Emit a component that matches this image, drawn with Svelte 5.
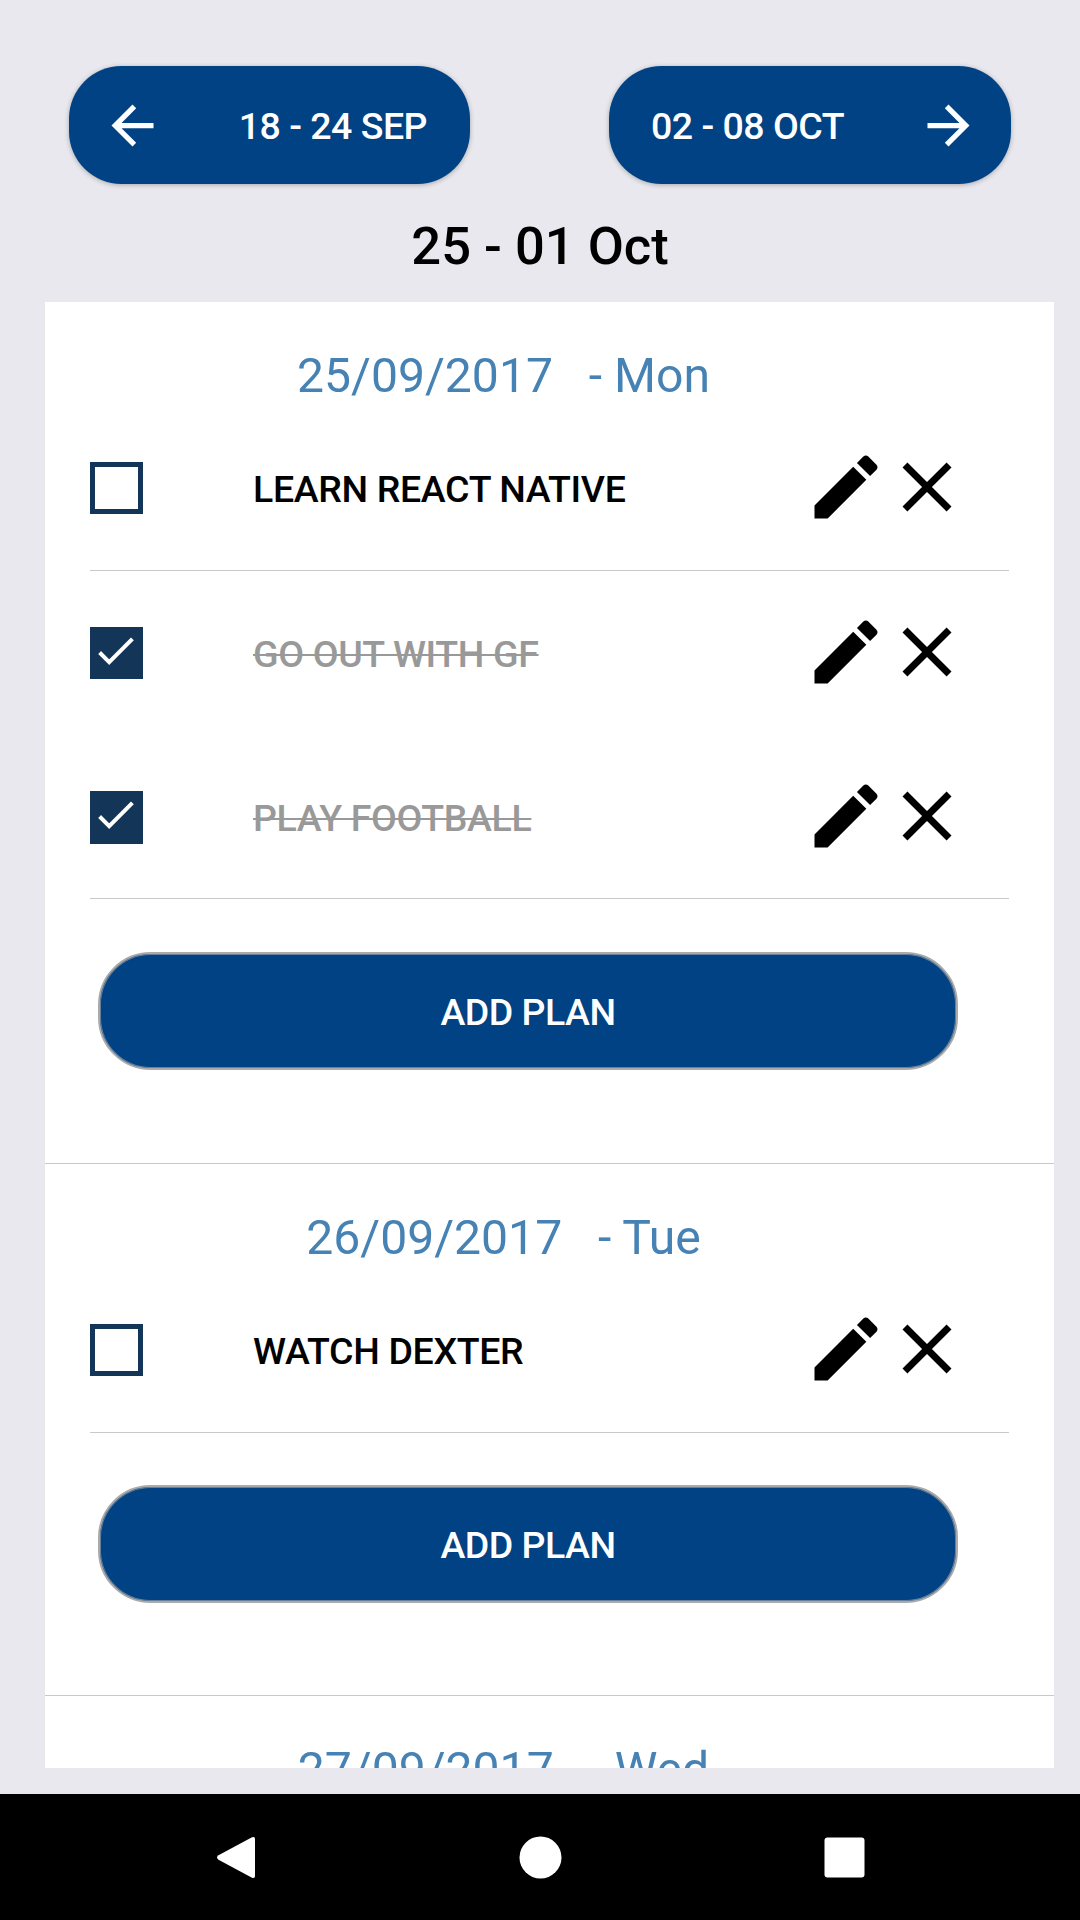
<script>
  const days = [
    {
      date: '25/09/2017',
      day: 'Mon',
      plans: [
        { title: 'LEARN REACT NATIVE', done: false },
        { title: 'GO OUT WITH GF', done: true },
        { title: 'PLAY FOOTBALL', done: true },
      ],
    },
    { date: '26/09/2017', day: 'Tue', plans: [{ title: 'WATCH DEXTER', done: false }] },
    { date: '27/09/2017', day: 'Wed', plans: [] },
  ];
</script>

<div class="screen">
  <header class="weeks">
    <button class="week prev">
      <svg viewBox="0 0 24 24"><path d="M20 11H7.83l5.59-5.59L12 4l-8 8 8 8 1.41-1.41L7.83 13H20v-2z" /></svg>
      <span>18 - 24 SEP</span>
    </button>
    <button class="week next">
      <span>02 - 08 OCT</span>
      <svg viewBox="0 0 24 24"><path d="M12 4l-1.41 1.41L16.17 11H4v2h12.17l-5.58 5.59L12 20l8-8z" /></svg>
    </button>
  </header>

  <h1>25 - 01 Oct</h1>

  <main>
    {#each days as d}
      <section>
        <h2>{d.date}&nbsp;&nbsp; - {d.day}</h2>
        <ul>
          {#each d.plans as plan}
            <li class:done={plan.done}>
              <span class="box">
                {#if plan.done}
                  <svg viewBox="0 0 53 52"><path d="M9.6 25.5l9.6 9.6L42.4 11.9" /></svg>
                {/if}
              </span>
              <span class="title">{plan.title}</span>
              <svg class="icon" viewBox="0 0 24 24"><path d="M3 17.25V21h3.75L17.81 9.94l-3.75-3.75L3 17.25zM20.71 7.04c.39-.39.39-1.02 0-1.41l-2.34-2.34c-.39-.39-1.02-.39-1.41 0l-1.83 1.83 3.75 3.75 1.83-1.83z" /></svg>
              <svg class="icon close" viewBox="0 0 24 24"><path d="M19 6.41L17.59 5 12 10.59 6.41 5 5 6.41 10.59 12 5 17.59 6.41 19 12 13.41 17.59 19 19 17.59 13.41 12z" /></svg>
            </li>
          {/each}
        </ul>
        <button class="add">ADD PLAN</button>
      </section>
    {/each}
  </main>

  <nav>
    <svg viewBox="0 0 63 63"><path d="M13.5 29.3L47 11.3Q50 10 50 13V50Q50 53 47 51.7L13.5 33.7Q10.5 31.5 13.5 29.3Z" /></svg>
    <svg viewBox="0 0 63 63"><circle cx="31.5" cy="31.5" r="21" /></svg>
    <svg viewBox="0 0 63 63"><rect x="11.5" y="11.5" width="40" height="40" rx="3" /></svg>
  </nav>
</div>

<style>
  :global(body) {
    margin: 0;
  }
  .screen {
    width: 1080px;
    height: 1920px;
    box-sizing: border-box;
    display: flex;
    flex-direction: column;
    overflow: hidden;
    background: #e9e8ee;
    color: #000;
    font-family: Roboto, sans-serif;
  }
  button {
    border: 0;
    margin: 0;
    box-sizing: border-box;
    height: 118px;
    border-radius: 52.5px;
    background: #004283;
    color: #fff;
    font: 500 37.5px/43px Roboto, sans-serif;
    letter-spacing: -0.5px;
  }
  .weeks {
    display: flex;
    justify-content: space-between;
    padding: 66px 69px 0;
  }
  .week {
    display: flex;
    align-items: center;
    justify-content: space-between;
    width: 401px;
    box-shadow: 0 1px 5px rgba(0, 0, 0, 0.28);
  }
  .week span {
    padding-top: 2px;
  }
  .prev {
    padding: 0 43px 0 31.5px;
  }
  .next {
    width: 402px;
    padding: 0 31.5px 0 42px;
  }
  .week svg {
    width: 63px;
    height: 63px;
    fill: #fff;
  }
  h1 {
    margin: 0;
    height: 118px;
    text-align: center;
    font-size: 52.5px;
    font-weight: 500;
    line-height: 124px;
  }
  main {
    height: 1466px;
    margin: 0 26px 0 45px;
    overflow: hidden;
    background: #fff;
  }
  section {
    border-bottom: 1px solid #c8c8c8;
  }
  h2 {
    margin: 0;
    padding-right: 92px;
    height: 104px;
    text-align: center;
    color: #4682b4;
    font-size: 48.1px;
    font-weight: 400;
    line-height: 148px;
    white-space: nowrap;
  }
  ul {
    list-style: none;
    margin: 0 45px;
    padding: 0;
  }
  li {
    display: flex;
    align-items: center;
    box-sizing: border-box;
    height: 164px;
  }
  li:first-child {
    height: 165px;
    border-bottom: 1px solid #c8c8c8;
  }
  li:nth-child(3) {
    padding-top: 1px;
    border-bottom: 1px solid #c8c8c8;
  }
  .box {
    box-sizing: border-box;
    width: 53px;
    height: 52px;
    border: 5px solid #133557;
  }
  li:nth-child(3) .box {
    height: 53px;
  }
  .done .box {
    border: 0;
    background: #133557;
  }
  .box svg {
    display: block;
    width: 53px;
    height: 52px;
    fill: none;
    stroke: #fff;
    stroke-width: 4;
  }
  .title {
    flex: 1;
    padding: 2px 0 0 110px;
    font-size: 37.5px;
    font-weight: 500;
    line-height: 43px;
    letter-spacing: -0.35px;
  }
  .done .title {
    color: #999;
    text-decoration: line-through;
    text-decoration-thickness: 2px;
  }
  .icon {
    width: 84px;
    height: 84px;
    margin-bottom: 1.4px;
  }
  .close {
    margin: 0 40px 1.4px -2.5px;
  }
  .add {
    display: block;
    width: 860px;
    margin: 53px 0 93px 53px;
    padding-top: 3px;
    border: 2px solid #aaa;
    box-shadow: inset 0 0 0 1px rgba(170, 170, 170, 0.6);
  }
  section:nth-child(2) .add {
    margin-top: 52px;
    margin-bottom: 92px;
  }
  nav {
    display: flex;
    align-items: center;
    justify-content: space-between;
    box-sizing: border-box;
    height: 126px;
    margin-top: 26px;
    padding: 0 204.5px;
    background: #000;
  }
  nav svg {
    width: 63px;
    height: 63px;
    fill: #fff;
  }
</style>
